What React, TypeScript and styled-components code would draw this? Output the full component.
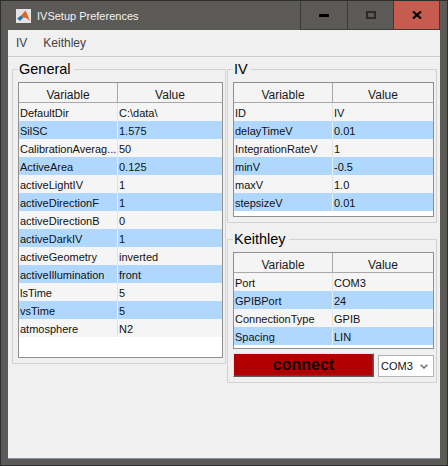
import React from 'react';
import styled, { createGlobalStyle } from 'styled-components';

const Global = createGlobalStyle`
  html, body { margin: 0; padding: 0; background: #5b5a57; }
  body { width: 448px; height: 466px; overflow: hidden; font-family: "Liberation Sans", Arial, sans-serif; }
  *, *::before, *::after { box-sizing: border-box; }
`;

const Window = styled.div`
  width: 448px;
  height: 466px;
  border: 1px solid #2e2e2e;
  background: #5b5a57;
  display: flex;
  flex-direction: column;
`;

const TitleBar = styled.div`
  height: 29px;
  flex: none;
  display: flex;
  align-items: center;
  padding: 0 7px 0 15px;
`;

const AppIcon = styled.svg`
  flex: none;
  margin-right: 6px;
`;

const TitleText = styled.div`
  flex: 1;
  color: #f4f4f4;
  font-size: 11px;
`;

const CaptionGroup = styled.div`
  display: flex;
  align-self: stretch;
`;

const CaptionButton = styled.div<{ $w: number; $close?: boolean }>`
  width: ${p => p.$w}px;
  display: flex;
  align-items: center;
  justify-content: center;
  border-left: 1px solid #3c3c3a;
  border-bottom: 1px solid #3c3c3a;
  background: ${p => (p.$close ? '#c65b4f' : 'transparent')};
  &:last-child { border-right: 1px solid #3c3c3a; }
`;

const Client = styled.div`
  flex: 1;
  margin: 0 7px 6px;
  background: #f0f0f0;
  border-bottom: 1px solid #8a94a4;
  display: flex;
  flex-direction: column;
`;

const MenuBar = styled.div`
  height: 27px;
  flex: none;
  display: flex;
  align-items: center;
  border-bottom: 1px solid #cdcdcd;
`;

const MenuItem = styled.div`
  padding: 0 8px;
  font-size: 12px;
  color: #444046;
`;

const Content = styled.div`
  display: grid;
  grid-template-columns: 214px 210px;
  column-gap: 1px;
  align-items: start;
  padding: 4px 3px 0 4px;
`;

const Column = styled.div`
  display: flex;
  flex-direction: column;
  gap: 8px;
`;

const Group = styled.fieldset`
  margin: 0;
  min-width: 0;
  padding: 5px 2px 5px 5px;
  border: 1px solid #d2d2d2;
`;

const Legend = styled.legend`
  padding: 0 3px 0 1px;
  font-size: 14.5px;
  line-height: 16px;
  color: #000;
`;

const Table = styled.div<{ $tail: number }>`
  border: 1px solid #8f8f8f;
  background: #fff;
  padding-bottom: ${p => p.$tail}px;
`;

const HeaderRow = styled.div`
  display: grid;
  grid-template-columns: 99px 1fr;
  height: 20px;
  border-bottom: 1px solid #a8a8a8;
  background: #f4f4f4;
`;

const HeaderCell = styled.div`
  text-align: center;
  font-size: 12px;
  line-height: 14px;
  padding-top: 5px;
  color: #1b1b1b;
  &:first-child { border-right: 1px solid #a8a8a8; }
`;

const DataRow = styled.div<{ $alt: boolean }>`
  display: grid;
  grid-template-columns: 99px 1fr;
  height: 18px;
  background: ${p => (p.$alt ? '#b0d8ff' : '#f5f5f5')};
`;

const Cell = styled.div<{ $alt: boolean }>`
  font-size: 11px;
  line-height: 16px;
  padding: 2px 0 0 1px;
  white-space: nowrap;
  overflow: hidden;
  color: #111;
  &:first-child { border-right: 1px solid ${p => (p.$alt ? '#e2f0fd' : '#e3e3e3')}; }
`;

const ActionRow = styled.div`
  display: flex;
  align-items: flex-end;
  gap: 4px;
  margin-top: 4px;
`;

const ConnectButton = styled.button`
  flex: 1;
  height: 24px;
  padding: 0;
  background: #b20000;
  border: 1px solid;
  border-color: #e6e6e6 #5c5c5c #5c5c5c #e6e6e6;
  box-shadow: inset -1px -1px 0 #8a2a2a;
  font: bold 16px "Liberation Sans", Arial, sans-serif;
  color: #150000;
`;

const Dropdown = styled.div`
  width: 56px;
  height: 22px;
  background: #fff;
  border: 1px solid #b4b4b4;
  display: flex;
  align-items: center;
  justify-content: space-between;
  padding: 0 5px 0 2px;
  font-size: 11px;
  color: #111;
`;

type Row = [string, string];

const generalRows: Row[] = [
  ['DefaultDir', 'C:\\data\\'],
  ['SilSC', '1.575'],
  ['CalibrationAverag...', '50'],
  ['ActiveArea', '0.125'],
  ['activeLightIV', '1'],
  ['activeDirectionF', '1'],
  ['activeDirectionB', '0'],
  ['activeDarkIV', '1'],
  ['activeGeometry', 'inverted'],
  ['activeIllumination', 'front'],
  ['lsTime', '5'],
  ['vsTime', '5'],
  ['atmosphere', 'N2'],
];

const ivRows: Row[] = [
  ['ID', 'IV'],
  ['delayTimeV', '0.01'],
  ['IntegrationRateV', '1'],
  ['minV', '-0.5'],
  ['maxV', '1.0'],
  ['stepsizeV', '0.01'],
];

const keithleyRows: Row[] = [
  ['Port', 'COM3'],
  ['GPIBPort', '24'],
  ['ConnectionType', 'GPIB'],
  ['Spacing', 'LIN'],
];

function PropTable({ rows, tail }: { rows: Row[]; tail: number }) {
  return (
    <Table $tail={tail}>
      <HeaderRow>
        <HeaderCell>Variable</HeaderCell>
        <HeaderCell>Value</HeaderCell>
      </HeaderRow>
      {rows.map(([k, v], i) => {
        const alt = i % 2 === 1;
        return (
          <DataRow key={k} $alt={alt}>
            <Cell $alt={alt}>{k}</Cell>
            <Cell $alt={alt}>{v}</Cell>
          </DataRow>
        );
      })}
    </Table>
  );
}

export default function App() {
  return (
    <>
      <Global />
      <Window>
        <TitleBar>
          <AppIcon width="15" height="14" viewBox="0 0 15 14">
            <rect width="15" height="14" fill="#e4e4e4" />
            <path d="M1 9.5 L5 6.5 L7.5 8.5 L4 12 Z" fill="#2f6fb4" />
            <path d="M5 6.5 L9.5 1.5 L14 12 L10.5 9 L7.5 8.5 Z" fill="#e2621f" />
            <path d="M9.5 1.5 L11.5 6 L14 12 Z" fill="#b2300f" />
          </AppIcon>
          <TitleText>IVSetup Preferences</TitleText>
          <CaptionGroup>
            <CaptionButton $w={47}>
              <svg width="10" height="3" viewBox="0 0 10 3">
                <rect width="10" height="3" fill="#000" />
              </svg>
            </CaptionButton>
            <CaptionButton $w={46}>
              <svg width="10" height="8" viewBox="0 0 10 8">
                <rect x="1" y="1" width="8" height="6" fill="none" stroke="#2a2a2a" strokeWidth="2" />
              </svg>
            </CaptionButton>
            <CaptionButton $w={47} $close>
              <svg width="10" height="8" viewBox="0 0 10 8">
                <path d="M1 0.5 L9 7.5 M9 0.5 L1 7.5" stroke="#000" strokeWidth="2.2" />
              </svg>
            </CaptionButton>
          </CaptionGroup>
        </TitleBar>
        <Client>
          <MenuBar>
            <MenuItem>IV</MenuItem>
            <MenuItem>Keithley</MenuItem>
          </MenuBar>
          <Content>
            <Group>
              <Legend>General</Legend>
              <PropTable rows={generalRows} tail={20} />
            </Group>
            <Column>
              <Group>
                <Legend>IV</Legend>
                <PropTable rows={ivRows} tail={5} />
              </Group>
              <Group>
                <Legend>Keithley</Legend>
                <PropTable rows={keithleyRows} tail={3} />
                <ActionRow>
                  <ConnectButton>connect</ConnectButton>
                  <Dropdown>
                    <span>COM3</span>
                    <svg width="8" height="5" viewBox="0 0 8 5">
                      <path d="M0.7 0.7 L4 4 L7.3 0.7" fill="none" stroke="#6e6e6e" strokeWidth="1.5" />
                    </svg>
                  </Dropdown>
                </ActionRow>
              </Group>
            </Column>
          </Content>
        </Client>
      </Window>
    </>
  );
}
